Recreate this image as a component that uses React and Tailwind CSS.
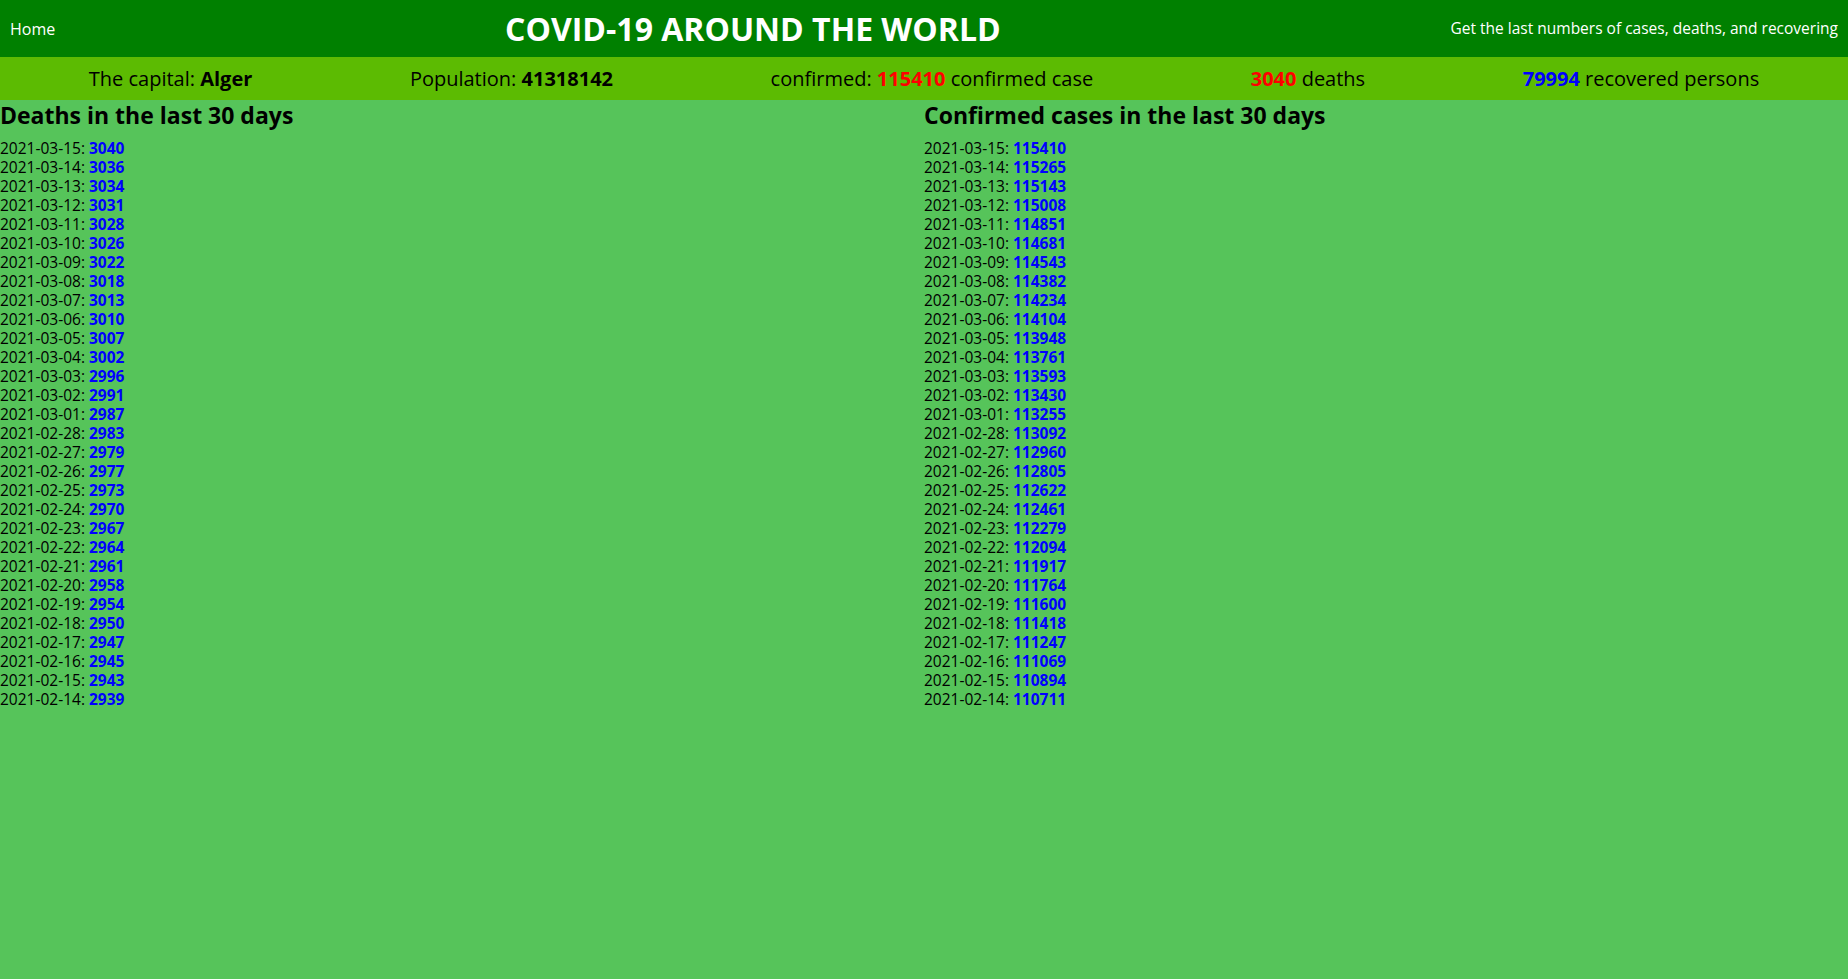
import React from "react";

const deaths = [
  ["2021-03-15", 3040], ["2021-03-14", 3036], ["2021-03-13", 3034], ["2021-03-12", 3031],
  ["2021-03-11", 3028], ["2021-03-10", 3026], ["2021-03-09", 3022], ["2021-03-08", 3018],
  ["2021-03-07", 3013], ["2021-03-06", 3010], ["2021-03-05", 3007], ["2021-03-04", 3002],
  ["2021-03-03", 2996], ["2021-03-02", 2991], ["2021-03-01", 2987], ["2021-02-28", 2983],
  ["2021-02-27", 2979], ["2021-02-26", 2977], ["2021-02-25", 2973], ["2021-02-24", 2970],
  ["2021-02-23", 2967], ["2021-02-22", 2964], ["2021-02-21", 2961], ["2021-02-20", 2958],
  ["2021-02-19", 2954], ["2021-02-18", 2950], ["2021-02-17", 2947], ["2021-02-16", 2945],
  ["2021-02-15", 2943], ["2021-02-14", 2939],
];

const confirmed = [
  ["2021-03-15", 115410], ["2021-03-14", 115265], ["2021-03-13", 115143], ["2021-03-12", 115008],
  ["2021-03-11", 114851], ["2021-03-10", 114681], ["2021-03-09", 114543], ["2021-03-08", 114382],
  ["2021-03-07", 114234], ["2021-03-06", 114104], ["2021-03-05", 113948], ["2021-03-04", 113761],
  ["2021-03-03", 113593], ["2021-03-02", 113430], ["2021-03-01", 113255], ["2021-02-28", 113092],
  ["2021-02-27", 112960], ["2021-02-26", 112805], ["2021-02-25", 112622], ["2021-02-24", 112461],
  ["2021-02-23", 112279], ["2021-02-22", 112094], ["2021-02-21", 111917], ["2021-02-20", 111764],
  ["2021-02-19", 111600], ["2021-02-18", 111418], ["2021-02-17", 111247], ["2021-02-16", 111069],
  ["2021-02-15", 110894], ["2021-02-14", 110711],
];

function Column({ title, rows }) {
  return (
    <div className="w-1/2">
      <h2 className="text-[23px] font-bold leading-[30px] mb-[9px] text-black">{title}</h2>
      <ul>
        {rows.map(([d, n]) => (
          <li key={d} className="text-[15.5px] leading-[19px] text-black">
            {d}: <span className="font-bold text-[#0000ff]">{n}</span>
          </li>
        ))}
      </ul>
    </div>
  );
}

export default function App() {
  return (
    <div
      className="min-h-[979px] bg-[#56c45a]"
      style={{ fontFamily: '"Open Sans", "Noto Sans", sans-serif' }}
    >
      <header className="h-[57px] bg-[#008000] flex items-center justify-between px-[10px] text-white">
        <span className="text-[16px]">Home</span>
        <h1 className="text-[32px] font-bold">COVID-19 AROUND THE WORLD</h1>
        <span className="text-[15.5px]">Get the last numbers of cases, deaths, and recovering</span>
      </header>
      <div className="h-[43px] bg-[#5cbb02] flex items-center justify-around px-[10px] text-[20px] text-black">
        <span>The capital: <b>Alger</b></span>
        <span>Population: <b>41318142</b></span>
        <span>confirmed: <b className="text-[#ff0000]">115410</b> confirmed case</span>
        <span><b className="text-[#ff0000]">3040</b> deaths</span>
        <span><b className="text-[#0000ff]">79994</b> recovered persons</span>
      </div>
      <div className="flex">
        <Column title="Deaths in the last 30 days" rows={deaths} />
        <Column title="Confirmed cases in the last 30 days" rows={confirmed} />
      </div>
    </div>
  );
}
